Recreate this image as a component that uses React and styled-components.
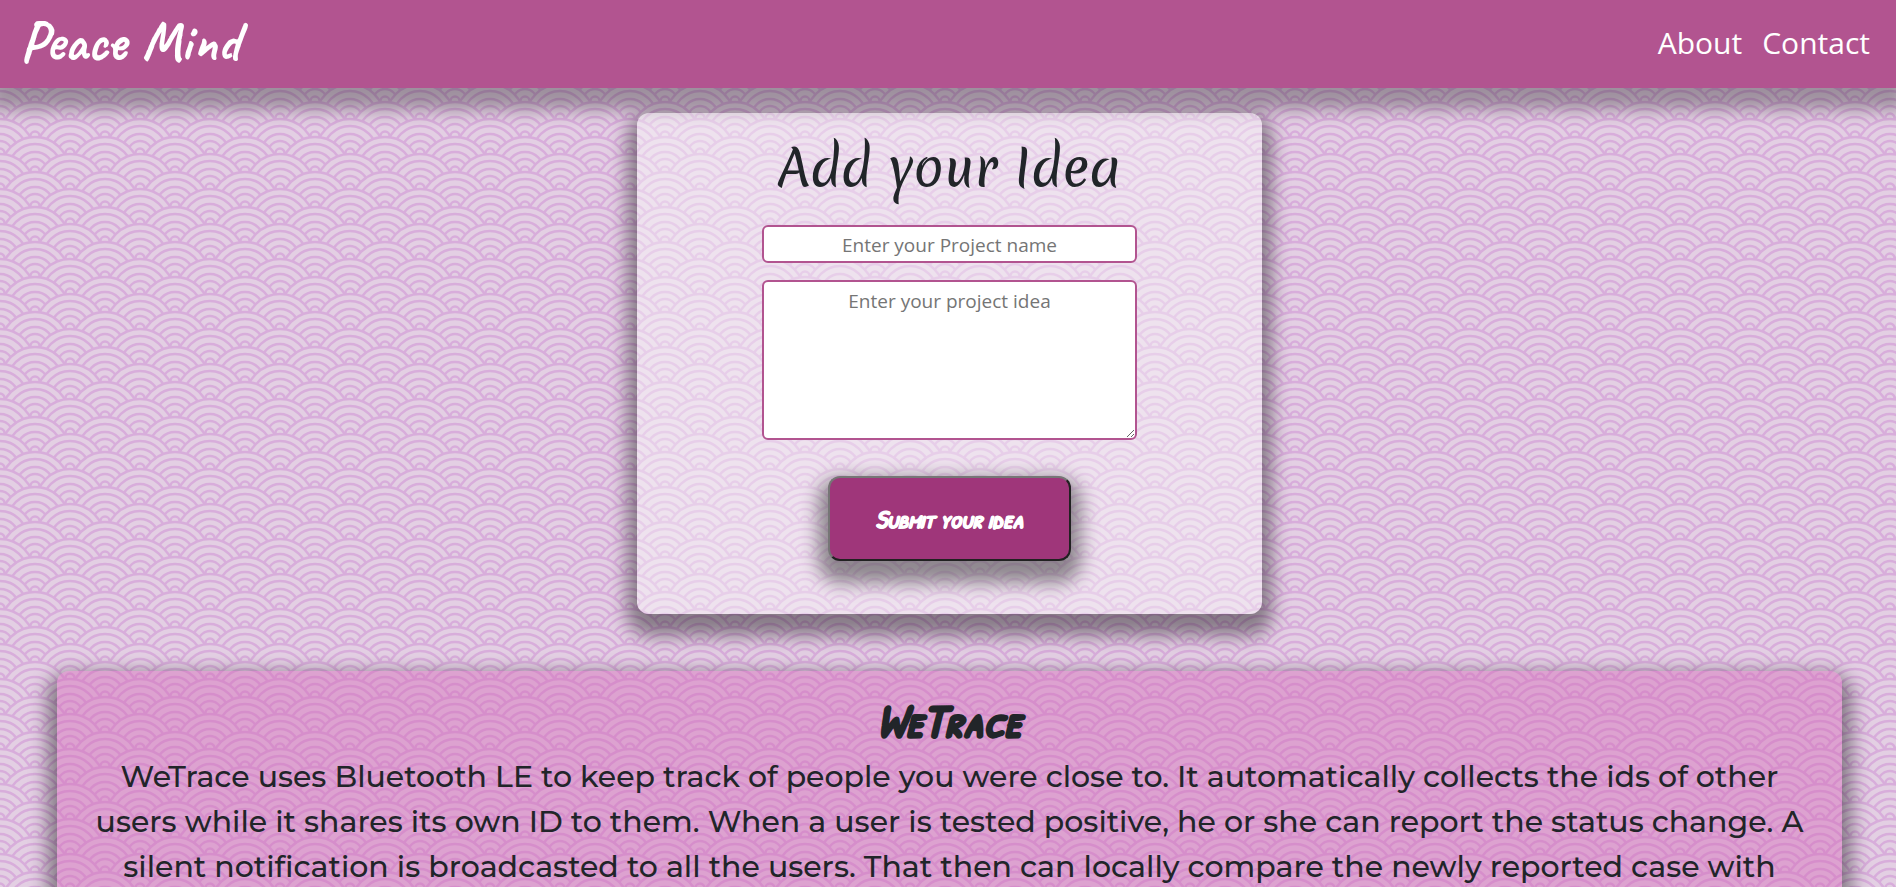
import React, { useState } from "react";
import styled, { createGlobalStyle } from "styled-components";

// one 70x35 tile of overlapping wave circles, drawn back row first
const rows = [
  [35, -4],
  [0, 13],
  [35, 31],
  [0, 48],
  [35, 66],
];

const rings = [34, 27, 19, 12, 4.5];

const waveTile = () => {
  const circles = rows
    .flatMap(([x, y]) => [x - 70, x, x + 70].map((cx) => [cx, y]))
    .map(([x, y]) =>
      rings.map((r) => `<circle cx="${x}" cy="${y}" r="${r}"/>`).join("")
    )
    .join("");
  const svg = `<svg xmlns="http://www.w3.org/2000/svg" width="70" height="35"><g fill="#e3cfe3" stroke="#d8addb" stroke-width="2.4">${circles}</g></svg>`;
  return `url("data:image/svg+xml,${encodeURIComponent(svg)}")`;
};

const ideas = [
  {
    name: "WeTrace",
    text: "WeTrace uses Bluetooth LE to keep track of people you were close to. It automatically collects the ids of other users while it shares its own ID to them. When a user is tested positive, he or she can report the status change. A silent notification is broadcasted to all the users. That then can locally compare the newly reported case with",
  },
];

const App = () => {
  const [name, setName] = useState("");
  const [idea, setIdea] = useState("");

  return (
    <>
      <GlobalStyle />
      <Navbar>
        <Brand href="#">Peace Mind</Brand>
        <NavLinks>
          <NavLink href="#about">About</NavLink>
          <NavLink href="#contact">Contact</NavLink>
        </NavLinks>
      </Navbar>
      <Main>
        <IdeaForm onSubmit={(e) => e.preventDefault()}>
          <FormTitle>Add your Idea</FormTitle>
          <NameInput
            aria-label="Project name"
            placeholder="Enter your Project name"
            value={name}
            onChange={(e) => setName(e.target.value)}
          />
          <IdeaInput
            aria-label="Project idea"
            placeholder="Enter your project idea"
            value={idea}
            onChange={(e) => setIdea(e.target.value)}
          />
          <SubmitButton type="submit">Submit your idea</SubmitButton>
        </IdeaForm>
        {ideas.map((item) => (
          <IdeaCard key={item.name}>
            <IdeaName>{item.name}</IdeaName>
            <IdeaText>{item.text}</IdeaText>
          </IdeaCard>
        ))}
      </Main>
    </>
  );
};

const GlobalStyle = createGlobalStyle`
  * {
    box-sizing: border-box;
  }

  html {
    scrollbar-width: none;
  }

  body {
    margin: 0;
    background-color: #e3cfe3;
    background-image: ${waveTile()};
    color: #212529;
    font-family: "Segoe UI", "Open Sans", sans-serif;
    font-size: 19px;
  }
`;

const Navbar = styled.nav`
  display: flex;
  align-items: center;
  justify-content: space-between;
  height: 88px;
  padding: 0 26px 4px 20px;
  background-color: #b25490;
  box-shadow: 0 12px 16px 10px rgba(0, 0, 0, 0.3);
`;

const Brand = styled.a`
  padding-bottom: 2px;
  color: #fff;
  font-family: Caveat, "Caveat Brush", cursive;
  font-size: 56px;
  font-weight: 700;
  text-decoration: none;
`;

const NavLinks = styled.div`
  display: flex;
  gap: 20px;
`;

const NavLink = styled.a`
  color: #fff;
  font-size: 30px;
  text-decoration: none;
`;

const Main = styled.main`
  display: flex;
  flex-direction: column;
  align-items: center;
  padding: 25px 54px 0 57px;
`;

const IdeaForm = styled.form`
  display: flex;
  flex-direction: column;
  align-items: center;
  width: 625px;
  max-width: 100%;
  padding: 20px 20px 53px;
  border-radius: 12px;
  background-color: rgba(255, 255, 255, 0.4);
  box-shadow: 0 12px 18px 10px rgba(0, 0, 0, 0.4);
`;

const FormTitle = styled.h1`
  margin: 0 0 22px;
  font-family: Merienda, Lato, cursive;
  font-size: 50px;
  font-weight: 400;
  line-height: 70px;
`;

const NameInput = styled.input`
  width: 375px;
  max-width: 100%;
  height: 38px;
  padding: 2px 12px 0;
  border: 2px solid #b25490;
  border-radius: 6px;
  background-color: #fff;
  color: inherit;
  font: inherit;
  text-align: center;

  &::placeholder {
    color: #757575;
  }
`;

const IdeaInput = styled.textarea`
  width: 375px;
  max-width: 100%;
  height: 160px;
  margin: 17px 0 36px;
  padding: 6px 12px;
  border: 2px solid #b25490;
  border-radius: 6px;
  background-color: #fff;
  color: inherit;
  font: inherit;
  text-align: center;

  &::placeholder {
    color: #757575;
  }
`;

const SubmitButton = styled.button`
  min-width: 243px;
  height: 85px;
  padding: 0 32px;
  border: 2px solid;
  border-color: #767676 #212121 #212121 #767676;
  border-radius: 12px;
  background-color: #9f367a;
  box-shadow: 0 12px 18px 10px rgba(0, 0, 0, 0.4);
  color: #fff;
  font-family: "Permanent Marker", "Patrick Hand SC", cursive;
  font-size: 25px;
  font-style: italic;
  font-weight: 700;
  -webkit-text-stroke: 1px;
  cursor: pointer;
`;

const IdeaCard = styled.section`
  width: 100%;
  margin-top: 57px;
  padding: 25px 36px;
  border-radius: 12px;
  background-color: rgba(212, 94, 180, 0.4);
  box-shadow: 0 12px 18px 10px rgba(0, 0, 0, 0.4);
  text-align: center;
`;

const IdeaName = styled.h2`
  margin: 0 0 10px;
  font-family: "Permanent Marker", "Patrick Hand SC", cursive;
  font-size: 46px;
  font-style: italic;
  font-weight: 700;
  line-height: 48px;
  -webkit-text-stroke: 2px;
`;

const IdeaText = styled.p`
  margin: 0;
  font-family: Montserrat, Inter, sans-serif;
  font-size: 30px;
  font-weight: 500;
  line-height: 45px;
`;

export default App;
